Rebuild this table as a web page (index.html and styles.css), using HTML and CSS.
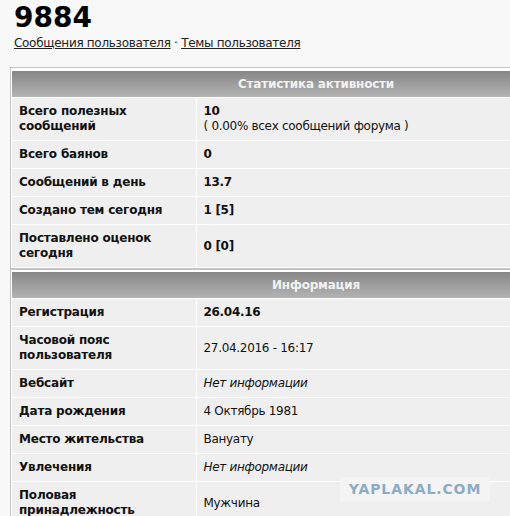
FILE: index.html
```html
<!DOCTYPE html>
<html lang="ru">
<head>
<meta charset="utf-8">
<title>9884</title>
<link rel="stylesheet" href="styles.css">
</head>
<body>
<div class="page">
  <h1 class="title">9884</h1>
  <div class="links"><a href="#">Сообщения пользователя</a> · <a href="#">Темы пользователя</a></div>

  <div class="box box-first">
    <table class="stats">
      <colgroup><col class="c-lbl"><col class="c-val"></colgroup>
      <tr><th colspan="2">Статистика активности</th></tr>
      <tr><td class="lbl">Всего полезных сообщений</td><td class="val"><b>10</b><br>( 0.00% всех сообщений форума )</td></tr>
      <tr><td class="lbl">Всего баянов</td><td class="val"><b>0</b></td></tr>
      <tr><td class="lbl">Сообщений в день</td><td class="val"><b>13.7</b></td></tr>
      <tr><td class="lbl">Создано тем сегодня</td><td class="val"><b>1 [5]</b></td></tr>
      <tr><td class="lbl">Поставлено оценок сегодня</td><td class="val"><b>0 [0]</b></td></tr>
    </table>
  </div>

  <div class="box box-next">
    <table class="stats">
      <colgroup><col class="c-lbl"><col class="c-val"></colgroup>
      <tr><th colspan="2">Информация</th></tr>
      <tr><td class="lbl">Регистрация</td><td class="val"><b>26.04.16</b></td></tr>
      <tr><td class="lbl">Часовой пояс пользователя</td><td class="val">27.04.2016 - 16:17</td></tr>
      <tr><td class="lbl">Вебсайт</td><td class="val"><i>Нет информации</i></td></tr>
      <tr><td class="lbl">Дата рождения</td><td class="val">4 Октябрь 1981</td></tr>
      <tr><td class="lbl">Место жительства</td><td class="val">Вануату</td></tr>
      <tr><td class="lbl">Увлечения</td><td class="val"><i>Нет информации</i></td></tr>
      <tr><td class="lbl">Половая принадлежность</td><td class="val">Мужчина</td></tr>
    </table>
  </div>

  <div class="watermark">YAPLAKAL.COM</div>
</div>
</body>
</html>
```
FILE: styles.css
```css
html, body {
  margin: 0;
  padding: 0;
  background: #f8f8f8;
}
body {
  font-family: "DejaVu Sans", Verdana, sans-serif;
  font-size: 12px;
  color: #111;
  overflow: hidden;
}
.page {
  position: relative;
  width: 510px;
  height: 516px;
  overflow: hidden;
}
.title {
  margin: 0;
  padding: 2px 0 0 14px;
  font-size: 28px;
  line-height: 32px;
  font-weight: bold;
  color: #000;
}
.links {
  padding-left: 14px;
  line-height: 15px;
  margin-top: 2px;
  color: #222;
  letter-spacing: -0.3px;
}
.links a {
  color: #222;
  text-decoration: underline;
}
.box {
  margin-left: 10px;
  width: 608px;
  border: 1px solid #c4c4c4;
  padding: 3px 1px 0 1px;
  background: #fff;
}
.box-first { margin-top: 16px; }
.box-next { margin-top: 0; padding-top: 2px; }
.stats {
  width: 608px;
  border-collapse: collapse;
  border-spacing: 0;
  table-layout: fixed;
}
.c-lbl { width: 184px; }
.stats th {
  height: 26px;
  padding: 0;
  background: linear-gradient(#878787, #b3b3b3);
  color: #f2f2f2;
  font-weight: bold;
  font-size: 12px;
  text-align: center;
  border-bottom: 1px solid #fff;
  letter-spacing: -0.2px;
}
.stats td {
  background: #efefef;
  padding: 6px 7px;
  line-height: 15px;
  border-bottom: 1px solid #fff;
  vertical-align: middle;
  letter-spacing: -0.3px;
}
.stats td.lbl {
  font-weight: bold;
  border-right: 1px solid #fff;
  letter-spacing: -0.2px;
}
.watermark {
  position: absolute;
  left: 340px;
  top: 477px;
  width: 150px;
  height: 25px;
  background: #f4f4f4;
  color: #8cabc4;
  font-family: "DejaVu Sans", sans-serif;
  font-weight: bold;
  font-size: 14px;
  line-height: 25px;
  text-align: center;
  letter-spacing: 0.9px;
}
```
